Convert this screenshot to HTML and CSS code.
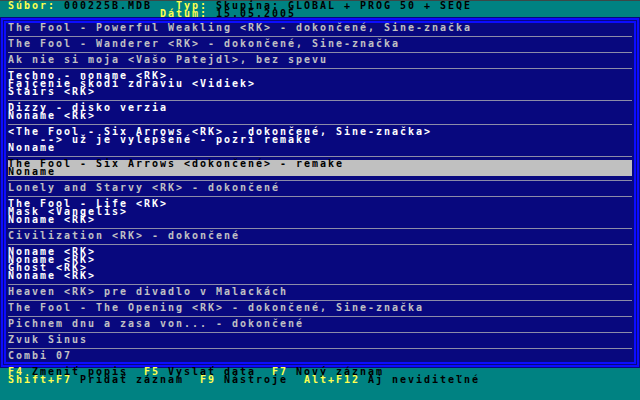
FILE: index.html
```html
<!DOCTYPE html>
<html lang="sk">
<head>
  <meta charset="UTF-8" />
  <title>Zoznam záznamov</title>
  <link rel="stylesheet" href="styles.css">
</head>
<body>

  <header class="top-bar">
    <div class="line"> <span class="key">Súbor:</span> 000225B.MDB   <span class="key">Typ:</span> Skupina: GLOBAL + PROG 50 + SEQE</div>
    <div class="line">                    <span class="key">Dátum:</span> 15.05.2005</div>
  </header>

  <main class="panel">
    <div class="frame">
      <div class="frame-inner">
        <ul class="list">
          <li class="row"><div class="entry">The Fool - Powerful Weakling &lt;RK&gt; - dokončené, Sine-značka</div></li>
          <li class="row"><div class="entry">The Fool - Wanderer &lt;RK&gt; - dokončené, Sine-značka</div></li>
          <li class="row"><div class="entry">Ak nie si moja &lt;Vašo Patejdl&gt;, bez spevu</div></li>
          <li class="row multi"><div class="entry">Techno - noname &lt;RK&gt;
Fajčenie škodí zdraviu &lt;Vidiek&gt;
Stairs &lt;RK&gt;</div></li>
          <li class="row multi"><div class="entry">Dizzy - disko verzia
Noname &lt;Rk&gt;</div></li>
          <li class="row multi"><div class="entry">&lt;The Fool - Six Arrows &lt;RK&gt; - dokončené, Sine-značka&gt;
    --&gt; už je vylepšené - pozri remake
Noname</div></li>
          <li class="row selected"><div class="entry">The Fool - Six Arrows &lt;dokončené&gt; - remake
Noname</div></li>
          <li class="row"><div class="entry">Lonely and Starvy &lt;RK&gt; - dokončené</div></li>
          <li class="row multi"><div class="entry">The Fool - Life &lt;RK&gt;
Mask &lt;Vangelis&gt;
Noname &lt;RK&gt;</div></li>
          <li class="row"><div class="entry">Civilization &lt;RK&gt; - dokončené</div></li>
          <li class="row multi"><div class="entry">Noname &lt;RK&gt;
Noname &lt;RK&gt;
Ghost &lt;RK&gt;
Noname &lt;RK&gt;</div></li>
          <li class="row"><div class="entry">Heaven &lt;RK&gt; pre divadlo v Malackách</div></li>
          <li class="row"><div class="entry">The Fool - The Opening &lt;RK&gt; - dokončené, Sine-značka</div></li>
          <li class="row"><div class="entry">Pichnem dnu a zasa von... - dokončené</div></li>
          <li class="row"><div class="entry">Zvuk Sinus</div></li>
          <li class="row"><div class="entry">Combi 07</div></li>
        </ul>
      </div>
    </div>
  </main>

  <footer class="bottom-bar">
    <div class="line"> <span class="key">F4</span> Zmeniť popis  <span class="key">F5</span> Vyslať data  <span class="key">F7</span> Nový záznam</div>
    <div class="line"> <span class="key">Shift+F7</span> Pridať záznam  <span class="key">F9</span> Nástroje  <span class="key">Alt+F12</span> Aj neviditeľné</div>
  </footer>

</body>
</html>
```

FILE: styles.css
```css
/* Reset */
* {
  margin: 0; padding: 0; box-sizing: content-box;
}

html, body {
  width: 640px;
  height: 400px;
  overflow: hidden;
}

body {
  background: #008282;
  color: #000;
  font-family: "DejaVu Sans Mono", "Liberation Mono", monospace;
  font-size: 10px;
  font-weight: bold;
  letter-spacing: 1.98px;
  line-height: 8px;
}

.line {
  height: 8px;
  white-space: pre;
}
.key {
  color: #ffff50;
}

/* Header */
.top-bar {
  height: 15px;
  padding-top: 1px;
  border-top: 1px solid #3c4848;
}

/* Double-line frame */
.panel {
  background: #08087e;
  padding: 1px;
}
.frame {
  border: 2px solid #0c0cff;
  padding: 1px;
}
.frame-inner {
  border: 2px solid #0c0cff;
  padding: 1px 2px 2px;
}

/* Entries */
.list {
  list-style: none;
}
.row {
  padding: 3px 0 4px;
  border-bottom: 1px solid #8c8ca8;
}
.row:first-child {
  padding-top: 0;
}
.row:last-child {
  padding-bottom: 0;
  border-bottom: none;
}
.entry {
  white-space: pre;
  color: #c0c0c4;
}
.row.multi .entry {
  color: #fff;
}
.row.selected .entry {
  background: #c0c0c0;
  color: #000;
}

/* Footer */
.bottom-bar {
  height: 32px;
}
```
